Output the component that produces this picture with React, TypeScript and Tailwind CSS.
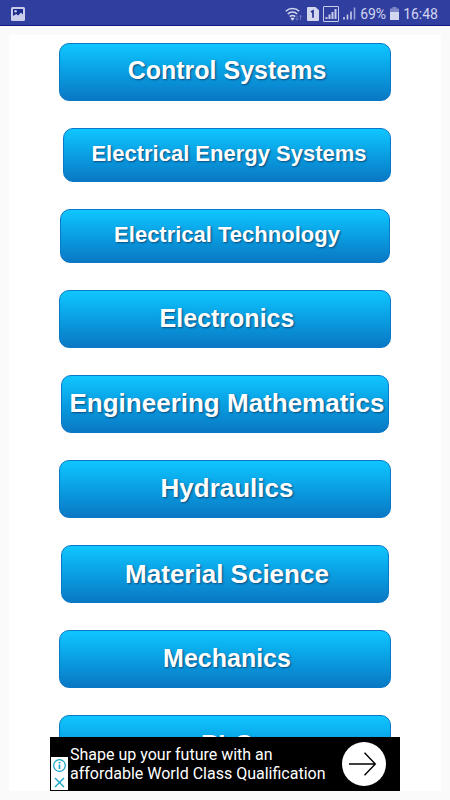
const subjects = [
    { name: 'Control Systems', className: 'h-[58px] pb-0.5 text-[25px]' },
    { name: 'Electrical Energy Systems', className: 'h-[54px] ml-1 pb-1 text-[22px]' },
    { name: 'Electrical Technology', className: 'h-[54px] mx-px pb-1 text-[22px]' },
    { name: 'Electronics', className: 'h-[58px] text-[25px]' },
    { name: 'Engineering Mathematics', className: 'h-[58px] mx-0.5 pb-0.5 text-[26px]' },
    { name: 'Hydraulics', className: 'h-[58px] pb-0.5 text-[26px]' },
    { name: 'Material Science', className: 'h-[58px] mx-0.5 text-[26px]' },
    { name: 'Mechanics', className: 'h-[58px] text-[25px]' },
    { name: 'PLC', className: 'h-[58px] text-[26px]' },
];

function PictureIcon() {
    return (
        <svg width="14" height="14" viewBox="0 0 14 14" aria-hidden="true">
            <rect x="0" y="0" width="14" height="14" rx="1.5" fill="#c9cdeb" />
            <path d="M2 2h10v5.5L10 5.6 7.2 8.6 5.2 7 2 9z" fill="#1c2a8c" />
            <circle cx="4.6" cy="4.2" r="1.2" fill="#c9cdeb" />
        </svg>
    );
}

function WifiIcon() {
    return (
        <svg width="18" height="14" viewBox="0 0 18 14" fill="none" aria-hidden="true">
            <path d="M0.8 4.2a9.6 9.6 0 0 1 13.4 0M2.8 7a6.7 6.7 0 0 1 9.4 0M4.8 9.7a3.9 3.9 0 0 1 5.4 0" stroke="#d3d6ef" strokeWidth="1.6" />
            <path d="M5.5 11.4a2.9 2.9 0 0 1 4 0L7.5 13.8z" fill="#d3d6ef" />
            <path d="M12 8.5v4.5M10.5 11.5l1.5 1.7 1.5-1.7M15.5 13V8.2M14 9.8l1.5-1.7L17 9.8" stroke="#6a73bd" />
        </svg>
    );
}

function SimIcon() {
    return (
        <svg width="12" height="14" viewBox="0 0 12 14" aria-hidden="true">
            <path d="M1 0h7.5L12 3.2V13a1 1 0 0 1-1 1H1a1 1 0 0 1-1-1V1a1 1 0 0 1 1-1z" fill="#d3d6ef" />
            <path d="M4 5 6 3.8v7" fill="none" stroke="#1c2a8c" strokeWidth="1.6" />
        </svg>
    );
}

function SignalIcon({ boxed = false }: { boxed?: boolean }) {
    if (boxed) {
        return (
            <svg width="16" height="16" viewBox="0 0 16 16" fill="none" aria-hidden="true">
                <rect x="0.5" y="0.5" width="15" height="15" rx="0.5" stroke="#c9cdeb" />
                <path d="M3.5 13v-2M6.5 13V8.5M9.5 13V6M12.5 13V3" stroke="#c9cdeb" strokeWidth="2" />
            </svg>
        );
    }
    return (
        <svg width="13" height="13" viewBox="0 0 13 13" fill="none" aria-hidden="true">
            <path d="M1 12.5v-2.5M4.5 12.5V7.5M8 12.5V4.5" stroke="#c9cdeb" strokeWidth="1.6" />
            <path d="M11.5 12.5V0.5" stroke="#9aa1d6" strokeWidth="1.6" />
        </svg>
    );
}

function BatteryIcon() {
    return (
        <svg width="9" height="13" viewBox="0 0 9 13" aria-hidden="true">
            <path d="M2.5 0h4v1.5H9V13H0V1.5h2.5z" fill="#8088c8" />
            <path d="M0 5h9v8H0z" fill="#d3d6ef" />
        </svg>
    );
}

function StatusBar() {
    return (
        <header className="flex h-[26px] shrink-0 items-center justify-between border-b border-[#0c1a86] bg-[#303f9f] pt-0.5 pr-3 pl-[11px] font-['Roboto',sans-serif] text-sm text-[#d3d6ef]">
            <PictureIcon />
            <div className="flex items-center gap-1">
                <WifiIcon />
                <SimIcon />
                <SignalIcon boxed />
                <SignalIcon />
                <span>69%</span>
                <BatteryIcon />
                <span>16:48</span>
            </div>
        </header>
    );
}

function AdBanner() {
    return (
        <aside className="absolute inset-x-0 bottom-0 mx-auto flex h-[54px] w-[350px] max-w-full items-end bg-black font-['Roboto',sans-serif] text-base text-white">
            <div className="mb-px ml-px flex w-[17px] shrink-0 flex-col bg-white text-[#14a3c7]">
                <button type="button" aria-label="About this ad" className="flex h-[17px] items-center justify-center">
                    <svg width="13" height="13" viewBox="0 0 13 13" fill="none" stroke="currentColor">
                        <circle cx="6.5" cy="6.5" r="5.8" strokeWidth="1.2" />
                        <path d="M6.5 5.5V10M6.5 3v1.5" strokeWidth="1.6" />
                    </svg>
                </button>
                <button type="button" aria-label="Close ad" className="flex h-4 items-center justify-center">
                    <svg width="11" height="11" viewBox="0 0 11 11" fill="none" stroke="currentColor" strokeWidth="1.4">
                        <path d="M1 1l9 9M10 1l-9 9" />
                    </svg>
                </button>
            </div>
            <a href="#" className="flex h-full flex-1 items-center justify-between pr-[14px] pl-0.5 leading-[19px]">
                <span>
                    Shape up your future with an
                    <br />
                    affordable World Class Qualification
                </span>
                <svg width="44" height="44" viewBox="0 0 44 44" fill="none" aria-hidden="true">
                    <circle cx="22" cy="22" r="22" fill="#fff" />
                    <path d="M7 22h26M22.5 10.8 33.3 22 22.5 33.2" stroke="#000" strokeWidth="1.4" />
                </svg>
            </a>
        </aside>
    );
}

export default function App() {
    return (
        <div className="flex h-screen flex-col bg-[#fafafa]">
            <StatusBar />
            <main className="relative m-[9px] flex-1 overflow-hidden bg-white">
                <nav className="flex flex-col gap-[27px] px-[50px] pt-2">
                    {subjects.map((subject) => (
                        <button
                            key={subject.name}
                            type="button"
                            className={`shrink-0 rounded-[10px] border border-[#0a78c8] bg-linear-to-b from-[#10c6ff] to-[#0a78c4] pl-1 font-['Liberation_Sans',Arial,sans-serif] font-bold whitespace-nowrap text-white [text-shadow:1px_1px_2px_#0b4a7a] ${subject.className}`}
                        >
                            {subject.name}
                        </button>
                    ))}
                </nav>
                <AdBanner />
            </main>
        </div>
    );
}
